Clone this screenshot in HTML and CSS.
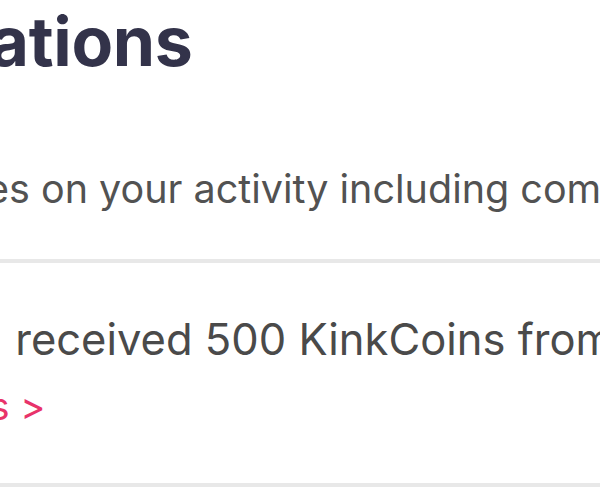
FILE: index.html
```html
<!DOCTYPE html>
<html lang="en">
<head>
<meta charset="utf-8">
<title>Notifications</title>
<link rel="stylesheet" href="styles.css">
</head>
<body>
<main class="page">
  <header class="head">
    <h1 class="title">Notifications</h1>
    <p class="intro">Get updates on your activity including comments and likes</p>
  </header>
  <ul class="list">
    <li class="item">
      <p class="msg"><span class="lead">You</span> received 500 KinkCoins from a friend</p>
      <a class="link" href="#">View KinkCoins &gt;</a>
    </li>
  </ul>
</main>
</body>
</html>
```
FILE: styles.css
```css
html, body {
  margin: 0;
  padding: 0;
  background: #ffffff;
}
.page {
  width: 600px;
  height: 490px;
  overflow: hidden;
}
.head {
  display: flex;
  flex-direction: column;
}
.title {
  margin: 0;
  margin-left: -232px;
  font-family: Inter, "Liberation Sans", sans-serif;
  font-weight: 700;
  font-size: 68px;
  line-height: 82px;
  color: #33334a;
  white-space: nowrap;
  letter-spacing: -0.3px;
}
.intro {
  margin: 0;
  margin-top: 83px;
  margin-left: -197px;
  font-family: Inter, "Liberation Sans", sans-serif;
  font-size: 39.5px;
  line-height: 48px;
  color: #525252;
  white-space: nowrap;
}
.list {
  list-style: none;
  margin: 0;
  margin-top: 46px;
  padding: 0;
}
.item {
  border-top: 4px solid #e8e8e8;
  border-bottom: 4px solid #e8e8e8;
  padding: 52px 0 55px;
  display: flex;
  flex-direction: column;
  gap: 21px;
}
.msg {
  margin: 0;
  margin-left: -81px;
  font-family: Inter, "Liberation Sans", sans-serif;
  font-size: 43.5px;
  line-height: 48px;
  color: #4a4a4a;
  white-space: nowrap;
}
.lead {
  margin-right: 6px;
}
.link {
  margin-left: -270px;
  font-family: Inter, "Liberation Sans", sans-serif;
  font-size: 38px;
  line-height: 44px;
  color: #e8336a;
  text-decoration: none;
  white-space: nowrap;
}
```
